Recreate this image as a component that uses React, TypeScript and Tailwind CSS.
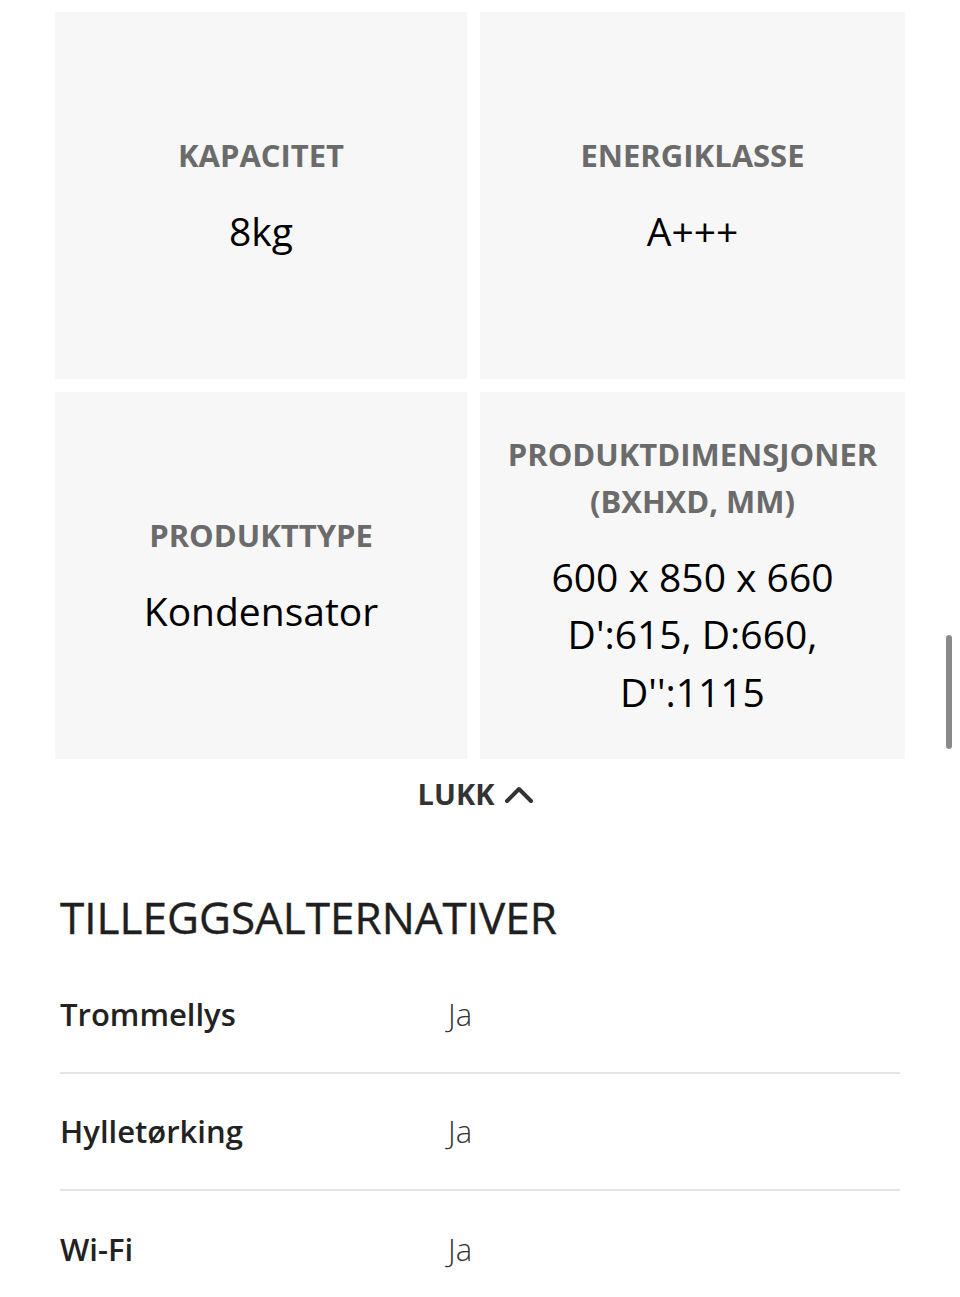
type Spec = {
  label: string[];
  value: string[];
};

const specs: Spec[] = [
  { label: ["KAPACITET"], value: ["8kg"] },
  { label: ["ENERGIKLASSE"], value: ["A+++"] },
  { label: ["PRODUKTTYPE"], value: ["Kondensator"] },
  {
    label: ["PRODUKTDIMENSJONER", "(BXHXD, MM)"],
    value: ["600 x 850 x 660", "D':615, D:660,", "D'':1115"],
  },
];

const options = [
  { name: "Trommellys", value: "Ja" },
  { name: "Hylletørking", value: "Ja" },
  { name: "Wi-Fi", value: "Ja" },
];

function SpecCard({ spec }: { spec: Spec }) {
  return (
    <div className="flex h-[367px] flex-col items-center justify-center bg-[#f7f7f7] text-center">
      <div className="text-[31px] font-bold leading-[47px] text-[#6b6b6b]">
        {spec.label.map((line) => (
          <div key={line}>{line}</div>
        ))}
      </div>
      <div className="mt-[23px] text-[39px] font-medium leading-[57.5px] text-black">
        {spec.value.map((line) => (
          <div key={line}>{line}</div>
        ))}
      </div>
    </div>
  );
}

function ChevronUp() {
  return (
    <svg
      width="30"
      height="20"
      viewBox="0 0 30 20"
      fill="none"
      stroke="currentColor"
      strokeWidth="4"
      strokeLinecap="round"
      strokeLinejoin="round"
    >
      <polyline points="3,17 15,5 27,17" />
    </svg>
  );
}

export default function App() {
  return (
    <div
      className="relative min-h-[1297px] bg-white pt-[12px]"
      style={{ fontFamily: '"Open Sans", sans-serif' }}
    >
      <div className="grid grid-cols-[412px_425px] gap-[13px] px-[55px]">
        {specs.map((spec) => (
          <SpecCard key={spec.label[0]} spec={spec} />
        ))}
      </div>

      <button className="mx-auto flex h-[70px] items-center gap-[10px] pr-[8px] text-[29px] font-bold text-[#333]">
        LUKK
        <ChevronUp />
      </button>

      <section className="px-[60px] pt-[58px]">
        <h2 className="text-[44px] font-medium leading-[60px] text-[#1f1f1f] [-webkit-text-stroke:0.4px_#1f1f1f]">
          TILLEGGSALTERNATIVER
        </h2>
        <ul className="mt-[10px]">
          {options.map((option, index) => (
            <li
              key={option.name}
              className={`flex h-[117px] items-center ${
                index < options.length - 1
                  ? "border-b-2 border-[#e4e4e4]"
                  : ""
              }`}
            >
              <span className="w-[388px] text-[31px] font-semibold text-[#222]">
                {option.name}
              </span>
              <span className="text-[31px] font-light text-[#333]">
                {option.value}
              </span>
            </li>
          ))}
        </ul>
      </section>

      <div className="absolute left-[946px] top-[635px] h-[114px] w-[6px] rounded-full bg-[#8a8a8a]" />
    </div>
  );
}
